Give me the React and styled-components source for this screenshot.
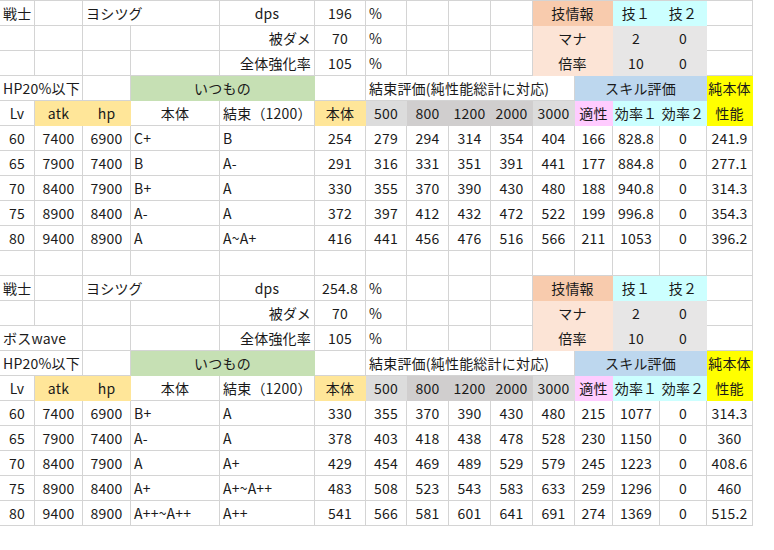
import React from 'react';
import styled, { createGlobalStyle } from 'styled-components';

const Global = createGlobalStyle`
  html, body { margin: 0; background: #fff; }
  body { font-family: "Noto Sans CJK JP", "Noto Sans", sans-serif; color: #1a1a1a; }
`;

const COLS = [35, 48, 48, 89, 95, 51, 41, 42, 42, 42, 42, 38, 47, 47, 46];

const Sheet = styled.div`
  display: grid;
  grid-template-columns: ${COLS.map(w => w + 'px').join(' ')};
  grid-auto-rows: 25px;
  border-top: 1px solid #d4d4d4;
  width: max-content;
`;

const Cell = styled.div`
  grid-column: span ${p => p.$span || 1};
  background: ${p => p.$bg || '#fff'};
  border-right: 1px solid ${p => p.$bg || '#d4d4d4'};
  border-bottom: 1px solid ${p => p.$bg || '#d4d4d4'};
  display: flex;
  align-items: center;
  justify-content: ${p => p.$align === 'l' ? 'flex-start' : p.$align === 'r' ? 'flex-end' : 'center'};
  padding: 0 3px;
  font-size: 14px;
  white-space: nowrap;
  overflow: visible;
  box-sizing: border-box;
  letter-spacing: 0.2px;
`;

const C = {
  orange: '#f8cbad', peach: '#fce4d6', cyan: '#ccffff', gray: '#e7e6e6',
  green: '#c6e0b4', blue: '#bdd7ee', pink: '#ffccff', yellow: '#ffff00',
  cream: '#ffe699', lg: '#dcdcdc', dg: '#d0cece',
};

// cell spec: [text, span, bg, align]
function header(dps, bossRow) {
  return [
    [['戦士', 1, null, 'l'], ['', 1], ['ヨシツグ', 2, null, 'l'], ['dps', 1], [dps, 1], ['%', 1, null, 'l'], ['', 1], ['', 1], ['', 1],
      ['技情報', 2, C.orange], ['技１', 1, C.cyan], ['技２', 1, C.cyan], ['', 1]],
    [['', 1], ['', 1], ['', 1], ['', 1], ['被ダメ', 1, null, 'r'], ['70', 1], ['%', 1, null, 'l'], ['', 1], ['', 1], ['', 1],
      ['マナ', 2, C.peach], ['2', 1, C.gray], ['0', 1, C.gray], ['', 1]],
    [bossRow ? ['ボスwave', 2, null, 'l'] : ['', 1], ...(bossRow ? [] : [['', 1]]), ['', 1], ['', 1], ['全体強化率', 1, null, 'r'], ['105', 1], ['%', 1, null, 'l'], ['', 1], ['', 1], ['', 1],
      ['倍率', 2, C.peach], ['10', 1, C.gray], ['0', 1, C.gray], ['', 1]],
    [['HP20%以下', 2, null, 'l'], ['', 1], ['いつもの', 2, C.green], ['', 1], ['結束評価(純性能総計に対応)', 5, null, 'l'],
      ['スキル評価', 3, C.blue], ['純本体', 1, C.yellow]],
    [['Lv', 1], ['atk', 1, C.cream], ['hp', 1, C.cream], ['本体', 1], ['結束（1200）', 1, null, 'l'], ['本体', 1, C.cream],
      ['500', 1, C.lg], ['800', 1, C.dg], ['1200', 1, C.dg], ['2000', 1, C.dg], ['3000', 1, C.lg],
      ['適性', 1, C.pink], ['効率１', 1, C.cyan], ['効率２', 1, C.cyan], ['性能', 1, C.yellow]],
  ];
}

const block1 = [
  ['60', '7400', '6900', 'C+', 'B', '254', '279', '294', '314', '354', '404', '166', '828.8', '0', '241.9'],
  ['65', '7900', '7400', 'B', 'A-', '291', '316', '331', '351', '391', '441', '177', '884.8', '0', '277.1'],
  ['70', '8400', '7900', 'B+', 'A', '330', '355', '370', '390', '430', '480', '188', '940.8', '0', '314.3'],
  ['75', '8900', '8400', 'A-', 'A', '372', '397', '412', '432', '472', '522', '199', '996.8', '0', '354.3'],
  ['80', '9400', '8900', 'A', 'A~A+', '416', '441', '456', '476', '516', '566', '211', '1053', '0', '396.2'],
];
const block2 = [
  ['60', '7400', '6900', 'B+', 'A', '330', '355', '370', '390', '430', '480', '215', '1077', '0', '314.3'],
  ['65', '7900', '7400', 'A-', 'A', '378', '403', '418', '438', '478', '528', '230', '1150', '0', '360'],
  ['70', '8400', '7900', 'A', 'A+', '429', '454', '469', '489', '529', '579', '245', '1223', '0', '408.6'],
  ['75', '8900', '8400', 'A+', 'A+~A++', '483', '508', '523', '543', '583', '633', '259', '1296', '0', '460'],
  ['80', '9400', '8900', 'A++~A++', 'A++', '541', '566', '581', '601', '641', '691', '274', '1369', '0', '515.2'],
];

const dataRow = vals => vals.map((v, i) => [v, 1, null, i === 3 || i === 4 ? 'l' : 'c']);

const rows = [
  ...header('196', false),
  ...block1.map(dataRow),
  COLS.map(() => ['', 1]),
  ...header('254.8', true),
  ...block2.map(dataRow),
];

export default function App() {
  return (
    <>
      <Global />
      <Sheet>
        {rows.flatMap((r, ri) =>
          r.map(([t, span, bg, align], ci) => (
            <Cell key={ri + '-' + ci} $span={span} $bg={bg} $align={align}>{t}</Cell>
          ))
        )}
      </Sheet>
    </>
  );
}
